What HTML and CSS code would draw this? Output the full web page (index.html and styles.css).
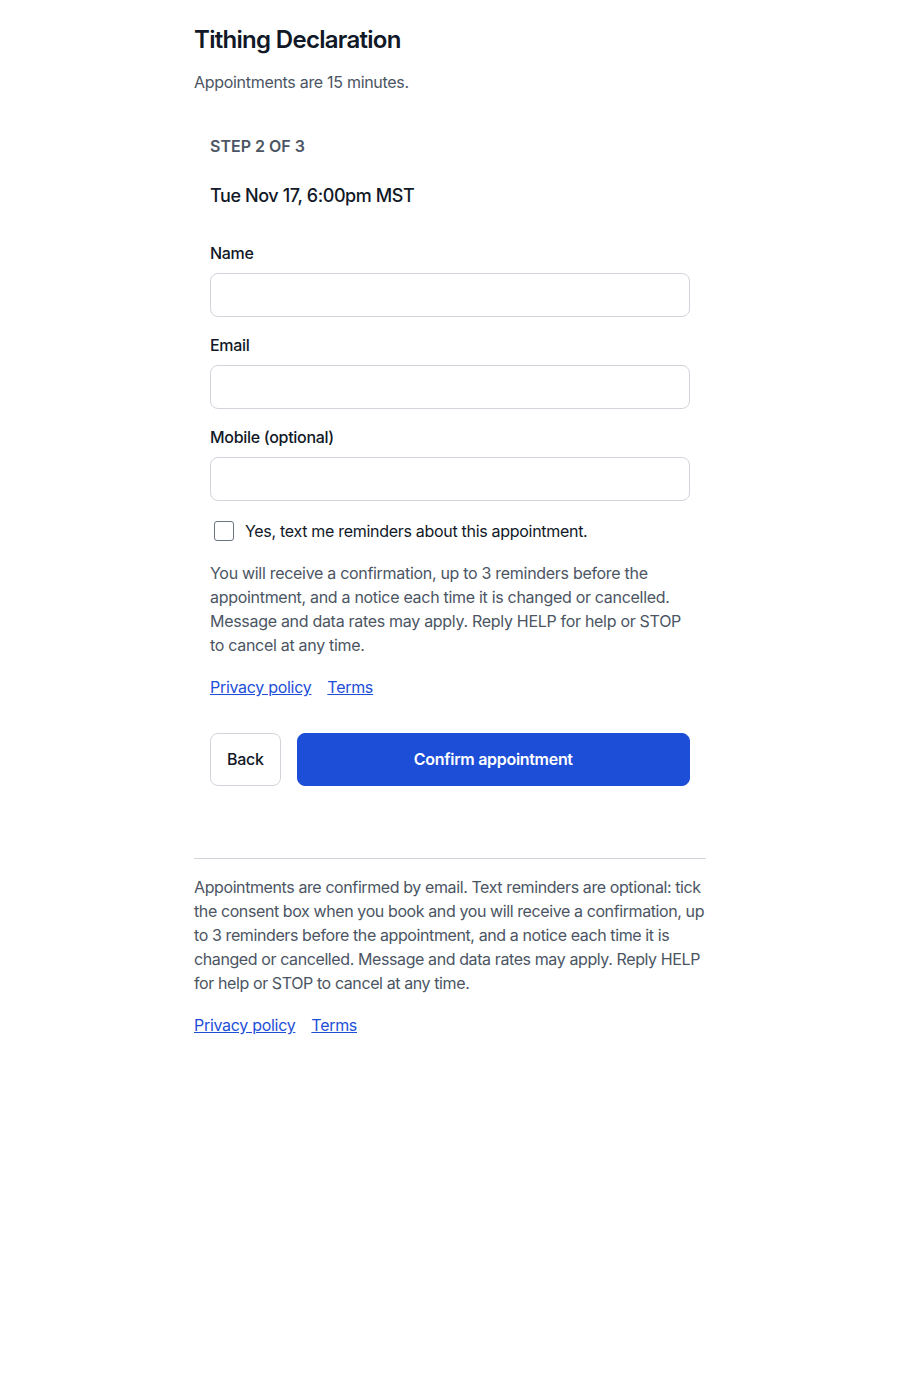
FILE: index.html
```html
<!DOCTYPE html>
<html lang="en">
<head>
<meta charset="utf-8">
<title>Tithing Declaration</title>
<link rel="stylesheet" href="styles.css">
</head>
<body>
<main class="page">
  <h1 class="title">Tithing Declaration</h1>
  <p class="subtitle">Appointments are 15 minutes.</p>

  <section class="card">
    <div class="step">STEP 2 OF 3</div>
    <div class="slot">Tue Nov 17, 6:00pm MST</div>

    <form class="form">
      <div class="field">
        <label class="label" for="name">Name</label>
        <input class="input" id="name" type="text">
      </div>
      <div class="field">
        <label class="label" for="email">Email</label>
        <input class="input" id="email" type="email">
      </div>
      <div class="field">
        <label class="label" for="mobile">Mobile (optional)</label>
        <input class="input" id="mobile" type="tel">
      </div>

      <label class="consent">
        <input class="checkbox" type="checkbox">
        <span>Yes, text me reminders about this appointment.</span>
      </label>

      <p class="note">You will receive a confirmation, up to 3 reminders before the appointment, and a notice each time it is changed or cancelled. Message and data rates may apply. Reply HELP for help or STOP to cancel at any time.</p>

      <div class="links">
        <a href="#">Privacy policy</a>
        <a href="#">Terms</a>
      </div>

      <div class="actions">
        <button type="button" class="btn btn-back">Back</button>
        <button type="button" class="btn btn-primary">Confirm appointment</button>
      </div>
    </form>
  </section>

  <footer class="footer">
    <p class="note">Appointments are confirmed by email. Text reminders are optional: tick the consent box when you book and you will receive a confirmation, up to 3 reminders before the appointment, and a notice each time it is changed or cancelled. Message and data rates may apply. Reply HELP for help or STOP to cancel at any time.</p>
    <div class="links">
      <a href="#">Privacy policy</a>
      <a href="#">Terms</a>
    </div>
  </footer>
</main>
</body>
</html>
```

FILE: styles.css
```css
* { box-sizing: border-box; }

body {
  margin: 0;
  background: #ffffff;
  color: #111827;
  font-family: Inter, "Liberation Sans", Arial, sans-serif;
  font-size: 16px;
  line-height: 24px;
  letter-spacing: -0.3px;
}

.page {
  max-width: 512px;
  margin: 0 auto;
  padding-top: 24px;
}

.title {
  margin: 0 0 14px;
  font-size: 24px;
  line-height: 32px;
  font-weight: 600;
  letter-spacing: -0.7px;
  color: #111827;
}

.subtitle {
  margin: 0;
  color: #4b5563;
}

.card {
  margin-top: 24px;
  padding: 16px;
}

.step {
  font-weight: 600;
  color: #4b5563;
  letter-spacing: 0;
}

.slot {
  margin-top: 24px;
  font-size: 18px;
  line-height: 28px;
  font-weight: 500;
  letter-spacing: -0.4px;
}

.form {
  margin-top: 31px;
  display: flex;
  flex-direction: column;
}

.field {
  display: flex;
  flex-direction: column;
  gap: 8px;
  margin-bottom: 16px;
}

.label {
  font-weight: 500;
}

.input {
  height: 44px;
  border: 1px solid #d1d5db;
  border-radius: 8px;
  padding: 0 12px;
  font: inherit;
  background: #fff;
}

.consent {
  margin-top: 2px;
  display: flex;
  align-items: center;
  gap: 11px;
  padding-left: 4px;
}

.checkbox {
  appearance: none;
  -webkit-appearance: none;
  margin: 0;
  width: 20px;
  height: 20px;
  border: 1px solid #6b7280;
  border-radius: 3px;
  background: #fff;
}

.note {
  margin: 18px 0 0;
  color: #4b5563;
}

.links {
  margin-top: 18px;
  display: flex;
  gap: 16px;
}

.links a {
  color: #1d4ed8;
  text-decoration: underline;
}

.actions {
  margin-top: 34px;
  display: flex;
  gap: 16px;
}

.btn {
  font: inherit;
  font-weight: 500;
  line-height: 23px;
  padding: 14px 16px;
  border-radius: 8px;
  cursor: pointer;
  letter-spacing: -0.3px;
}

.btn-back {
  background: #fff;
  border: 1px solid #d1d5db;
  color: #111827;
}

.btn-primary {
  flex: 1;
  background: #1d4ed8;
  border: 1px solid #1d4ed8;
  color: #fff;
  font-weight: 600;
}

.footer {
  margin-top: 56px;
  border-top: 1px solid #d1d5db;
  padding-top: 16px;
}

.footer .note {
  margin-top: 0;
  letter-spacing: -0.4px;
}
```
